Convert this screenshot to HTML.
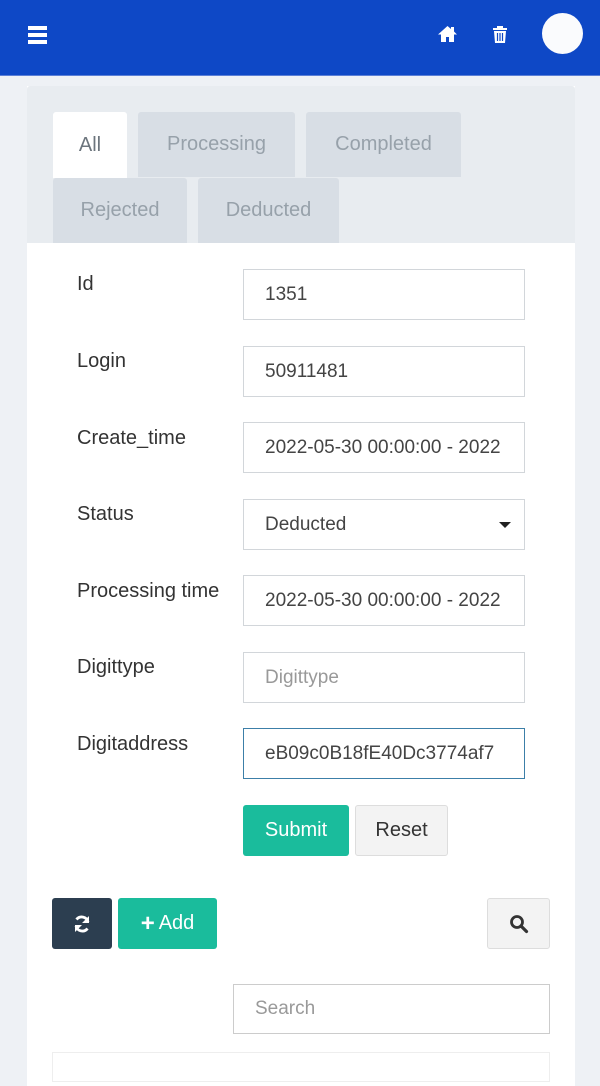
<!DOCTYPE html>
<html><head><meta charset="utf-8"><style>
*{box-sizing:border-box;margin:0;padding:0}
body{width:600px;height:1074px;overflow:hidden;background:#eef1f5;font-family:"Liberation Sans",sans-serif;position:relative}
.hdr{position:absolute;left:0;top:0;width:600px;height:76px;background:#0e48c6;border-bottom:1px solid #5b7fd6}
.abs{position:absolute}
.panel{position:absolute;left:27px;top:86px;width:548px;height:1000px;background:#fff}
.tabarea{position:absolute;left:27px;top:86px;width:548px;height:157px;background:#e8ecf0;border-radius:3px 3px 0 0}
.tab{position:absolute;background:#d8dee5;color:#97a1aa;font-size:20px;display:flex;align-items:center;justify-content:center;border-radius:3px 3px 0 0}
.tab.act{background:#fff;color:#6c757d}
.lbl{position:absolute;left:77px;font-size:20px;color:#333}
.inp{position:absolute;left:243px;width:282px;height:51px;border:1px solid #d2d6da;font-size:19px;color:#444;padding-left:21px;display:flex;align-items:center;white-space:nowrap;overflow:hidden;background:#fff}
.btn{position:absolute;display:flex;align-items:center;justify-content:center;font-size:20px;border-radius:3px}
</style></head><body>
<div class="hdr">
 <div class="abs" style="left:28px;top:26px;width:19px;height:4px;background:#fff;box-shadow:0 7px 0 #fff,0 14px 0 #fff"></div>
 <svg class="abs" style="left:437px;top:25px" width="21" height="18" viewBox="0 0 21 18"><path d="M10.5 1L1 9.5h3V17h5v-5h3v5h5V9.5h3L17 6.5V2h-3v2z" fill="#fff"/></svg>
 <svg class="abs" style="left:492px;top:25px" width="16" height="19" viewBox="0 0 16 19"><path d="M1 3h14v2H1zM5 1h6v2H5zM2 6h12l-1 12H3z" fill="#fff"/><path d="M5.5 8v8M8 8v8M10.5 8v8" stroke="#0e48c6" stroke-width="1.2"/></svg>
 <div class="abs" style="left:542px;top:13px;width:41px;height:41px;border-radius:50%;background:#fafbfd"></div>
</div>
<div class="panel"></div>
<div class="tabarea"></div>
<div class="tab act" style="left:53px;top:112px;width:74px;height:66px">All</div>
<div class="tab" style="left:138px;top:112px;width:157px;height:65px">Processing</div>
<div class="tab" style="left:306px;top:112px;width:155px;height:65px">Completed</div>
<div class="tab" style="left:53px;top:178px;width:134px;height:65px">Rejected</div>
<div class="tab" style="left:198px;top:178px;width:141px;height:65px">Deducted</div>

<div class="lbl" style="top:273px">Id</div><div class="inp" style="top:269px">1351</div>
<div class="lbl" style="top:350px">Login</div><div class="inp" style="top:346px">50911481</div>
<div class="lbl" style="top:427px">Create_time</div><div class="inp" style="top:422px">2022-05-30 00:00:00 - 2022</div>
<div class="lbl" style="top:503px">Status</div><div class="inp" style="top:499px">Deducted<span class="abs" style="right:13px;top:22px;border:6px solid transparent;border-top:6px solid #222;border-bottom:0"></span></div>
<div class="lbl" style="top:580px">Processing time</div><div class="inp" style="top:575px">2022-05-30 00:00:00 - 2022</div>
<div class="lbl" style="top:656px">Digittype</div><div class="inp" style="top:652px;color:#999">Digittype</div>
<div class="lbl" style="top:733px">Digitaddress</div><div class="inp" style="top:728px;border-color:#3c7fa8">eB09c0B18fE40Dc3774af7</div>

<div class="btn" style="left:243px;top:805px;width:106px;height:51px;background:#1abc9c;color:#fff">Submit</div>
<div class="btn" style="left:355px;top:805px;width:93px;height:51px;background:#f3f3f3;border:1px solid #ddd;color:#333">Reset</div>

<div class="btn" style="left:52px;top:898px;width:60px;height:51px;background:#2c3e50">
 <svg width="20" height="20" viewBox="0 0 20 20"><path d="M16 8A6.5 6.5 0 0 0 4.5 5.5M4 12a6.5 6.5 0 0 0 11.5 2.5" stroke="#fff" stroke-width="2.8" fill="none"/><path d="M17 2v7h-7zM3 18v-7h7z" fill="#fff"/></svg></div>
<div class="btn" style="left:118px;top:898px;width:99px;height:51px;background:#1abc9c;color:#fff"><b style="font-size:24px;margin-right:4px">+</b>Add</div>
<div class="btn" style="left:487px;top:898px;width:63px;height:51px;background:#f3f3f3;border:1px solid #ddd">
 <svg width="20" height="20" viewBox="0 0 20 20"><circle cx="8" cy="8" r="5.5" stroke="#333" stroke-width="2.8" fill="none"/><path d="M12 12l5.5 5.5" stroke="#333" stroke-width="3.2" stroke-linecap="round"/></svg></div>
<div class="inp" style="left:233px;top:984px;width:317px;height:50px;color:#999;border-color:#ccc">Search</div>
<div class="abs" style="left:52px;top:1052px;width:498px;height:30px;border:1px solid #eee"></div>
</body></html>
